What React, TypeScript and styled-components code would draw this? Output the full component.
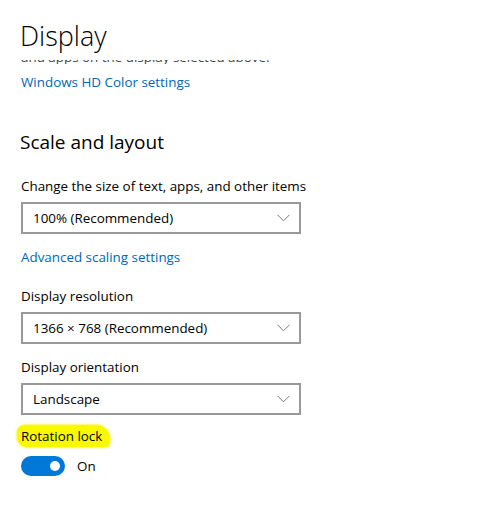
import React from "react";
import styled, { createGlobalStyle } from "styled-components";

const GlobalStyle = createGlobalStyle`
  html, body {
    margin: 0;
    padding: 0;
    background: #ffffff;
  }
  body {
    font-family: "Open Sans", "Noto Sans", sans-serif;
    color: #000000;
  }
`;

const Page = styled.div`
  width: 477px;
  height: 511px;
  overflow: hidden;
  padding: 0 0 0 21px;
  box-sizing: border-box;
  display: flex;
  flex-direction: column;
  align-items: flex-start;
`;

const Title = styled.h1`
  margin: 16px 0 0 -1px;
  font-size: 27px;
  font-weight: 300;
  line-height: 40px;
`;

// text scrolled away under the header: only its bottom few pixels show
const ClippedLine = styled.div`
  height: 4px;
  overflow: hidden;
  margin-top: 4px;
`;

const ClippedText = styled.span`
  display: block;
  font-size: 13.4px;
  line-height: 4px;
  white-space: nowrap;
  color: #444;
  transform: translateY(-5px);
`;

const Link = styled.a<{ $top: number }>`
  margin-top: ${(p) => p.$top}px;
  font-size: 13.4px;
  line-height: 20px;
  color: #0067b8;
  text-decoration: none;
`;

const SectionTitle = styled.h2`
  margin: 36px 0 0 -1px;
  font-size: 19px;
  font-weight: 400;
  line-height: 28px;
`;

const Label = styled.div<{ $top: number }>`
  margin-top: ${(p) => p.$top}px;
  font-size: 13.4px;
  line-height: 20px;
`;

const Select = styled.div`
  margin-top: 6px;
  width: 280px;
  height: 32px;
  box-sizing: border-box;
  border: 2px solid #999999;
  display: flex;
  align-items: center;
  justify-content: space-between;
  padding: 0 9px 0 10px;
  font-size: 13.4px;
`;

const Highlight = styled.span`
  display: inline-block;
  margin-left: -4px;
  padding: 3px 8px 3px 4px;
  background: #f8f800;
  border-radius: 8px 14px 5px 10px;
  box-shadow: 0 0 2px 1px #fafa55;
  font-size: 13.4px;
  line-height: 16px;
`;

const ToggleRow = styled.div`
  margin-top: 9px;
  display: flex;
  align-items: center;
  gap: 12px;
  font-size: 13.4px;
`;

const Toggle = styled.div<{ $on: boolean }>`
  width: 44px;
  height: 20px;
  box-sizing: border-box;
  border-radius: 10px;
  background: ${(p) => (p.$on ? "#0078d7" : "#ffffff")};
  border: 2px solid ${(p) => (p.$on ? "#0078d7" : "#333")};
  display: flex;
  align-items: center;
  justify-content: ${(p) => (p.$on ? "flex-end" : "flex-start")};
  padding: 0 3px;
`;

const Knob = styled.div`
  width: 10px;
  height: 10px;
  border-radius: 50%;
  background: #ffffff;
`;

function Chevron() {
  return (
    <svg width="13" height="8" viewBox="0 0 13 8">
      <path d="M0.5 0.8 L6.5 6.8 L12.5 0.8" fill="none" stroke="#7a7a7a" strokeWidth="1" />
    </svg>
  );
}

function Dropdown({ value }: { value: string }) {
  return (
    <Select>
      <span>{value}</span>
      <Chevron />
    </Select>
  );
}

export default function App() {
  return (
    <>
      <GlobalStyle />
      <Page>
        <Title>Display</Title>
        <ClippedLine>
          <ClippedText>and apps on the display selected above.</ClippedText>
        </ClippedLine>
        <Link $top={8} href="#">Windows HD Color settings</Link>

        <SectionTitle>Scale and layout</SectionTitle>
        <Label $top={20}>Change the size of text, apps, and other items</Label>
        <Dropdown value="100% (Recommended)" />
        <Link $top={13} href="#">Advanced scaling settings</Link>

        <Label $top={19}>Display resolution</Label>
        <Dropdown value="1366 × 768 (Recommended)" />

        <Label $top={13}>Display orientation</Label>
        <Dropdown value="Landscape" />

        <Label $top={10}>
          <Highlight>Rotation lock</Highlight>
        </Label>
        <ToggleRow>
          <Toggle $on>
            <Knob />
          </Toggle>
          <span>On</span>
        </ToggleRow>
      </Page>
    </>
  );
}
